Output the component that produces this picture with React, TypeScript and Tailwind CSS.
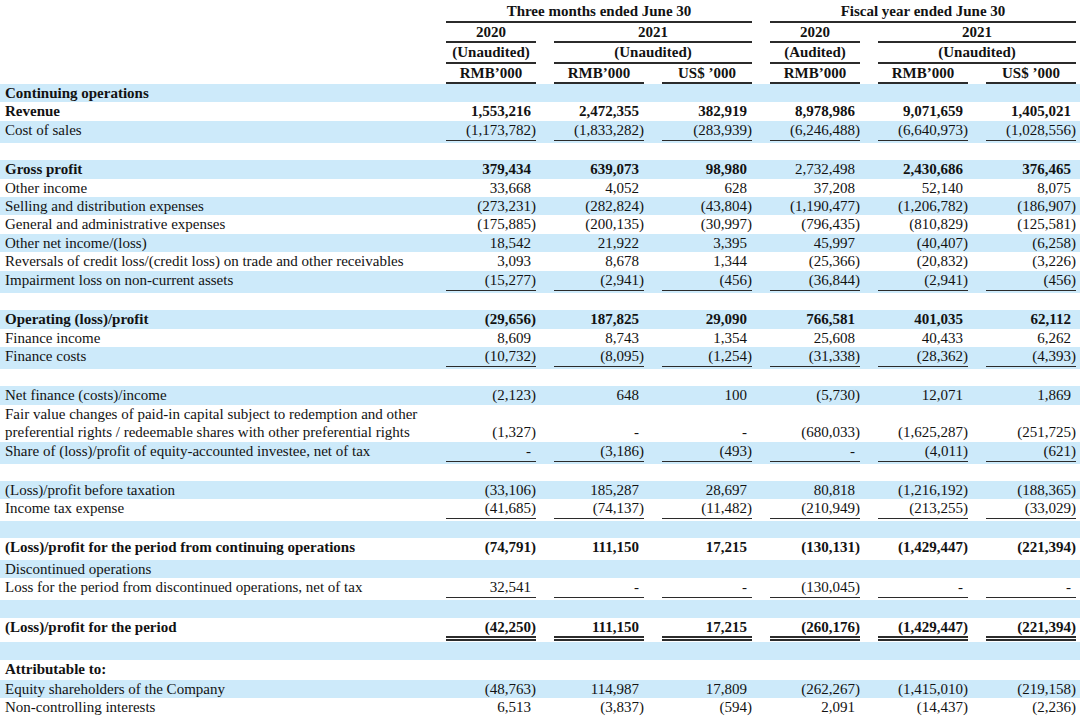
import React from "react";

type Row = {
  label?: string | string[];
  lb?: boolean;
  v?: string[];
  b?: boolean[];
  line?: "single" | "double";
  h: string;
};

const N = "h-[18.4px]";
const L = "h-[22px]";
const B = "h-[17.5px]";
const all = [true, true, true, true, true, true];

const rows: Row[] = [
  { label: "Continuing operations", lb: true, h: N },
  { label: "Revenue", lb: true, v: ["1,553,216", "2,472,355", "382,919", "8,978,986", "9,071,659", "1,405,021"], b: all, h: N },
  { label: "Cost of sales", v: ["(1,173,782)", "(1,833,282)", "(283,939)", "(6,246,488)", "(6,640,973)", "(1,028,556)"], line: "single", h: L },
  { h: B },
  { label: "Gross profit", lb: true, v: ["379,434", "639,073", "98,980", "2,732,498", "2,430,686", "376,465"], b: [true, true, true, false, true, true], h: N },
  { label: "Other income", v: ["33,668", "4,052", "628", "37,208", "52,140", "8,075"], h: N },
  { label: "Selling and distribution expenses", v: ["(273,231)", "(282,824)", "(43,804)", "(1,190,477)", "(1,206,782)", "(186,907)"], h: N },
  { label: "General and administrative expenses", v: ["(175,885)", "(200,135)", "(30,997)", "(796,435)", "(810,829)", "(125,581)"], h: N },
  { label: "Other net income/(loss)", v: ["18,542", "21,922", "3,395", "45,997", "(40,407)", "(6,258)"], h: N },
  { label: "Reversals of credit loss/(credit loss) on trade and other receivables", v: ["3,093", "8,678", "1,344", "(25,366)", "(20,832)", "(3,226)"], h: N },
  { label: "Impairment loss on non-current assets", v: ["(15,277)", "(2,941)", "(456)", "(36,844)", "(2,941)", "(456)"], line: "single", h: L },
  { h: B },
  { label: "Operating (loss)/profit", lb: true, v: ["(29,656)", "187,825", "29,090", "766,581", "401,035", "62,112"], b: all, h: N },
  { label: "Finance income", v: ["8,609", "8,743", "1,354", "25,608", "40,433", "6,262"], h: N },
  { label: "Finance costs", v: ["(10,732)", "(8,095)", "(1,254)", "(31,338)", "(28,362)", "(4,393)"], line: "single", h: L },
  { h: B },
  { label: "Net finance (costs)/income", v: ["(2,123)", "648", "100", "(5,730)", "12,071", "1,869"], h: N },
  {
    label: [
      "Fair value changes of paid-in capital subject to redemption and other",
      "preferential rights / redeemable shares with other preferential rights",
    ],
    v: ["(1,327)", "-", "-", "(680,033)", "(1,625,287)", "(251,725)"],
    h: "h-[36.8px]",
  },
  { label: "Share of (loss)/profit of equity-accounted investee, net of tax", v: ["-", "(3,186)", "(493)", "-", "(4,011)", "(621)"], line: "single", h: L },
  { h: B },
  { label: "(Loss)/profit before taxation", v: ["(33,106)", "185,287", "28,697", "80,818", "(1,216,192)", "(188,365)"], h: N },
  { label: "Income tax expense", v: ["(41,685)", "(74,137)", "(11,482)", "(210,949)", "(213,255)", "(33,029)"], line: "single", h: L },
  { h: "h-[16.5px]" },
  { label: "(Loss)/profit for the period from continuing operations", lb: true, v: ["(74,791)", "111,150", "17,215", "(130,131)", "(1,429,447)", "(221,394)"], b: all, h: "h-[22px]" },
  { label: "Discontinued operations", h: N },
  { label: "Loss for the period from discontinued operations, net of tax", v: ["32,541", "-", "-", "(130,045)", "-", "-"], line: "single", h: L },
  { h: B },
  { label: "(Loss)/profit for the period", lb: true, v: ["(42,250)", "111,150", "17,215", "(260,176)", "(1,429,447)", "(221,394)"], b: all, line: "double", h: "h-[24px]" },
  { h: "h-[18.5px]" },
  { label: "Attributable to:", lb: true, h: "h-[19.5px]" },
  { label: "Equity shareholders of the Company", v: ["(48,763)", "114,987", "17,809", "(262,267)", "(1,415,010)", "(219,158)"], h: N },
  { label: "Non-controlling interests", v: ["6,513", "(3,837)", "(594)", "2,091", "(14,437)", "(2,236)"], h: N },
];

const grid = "grid grid-cols-[423px_repeat(6,90px)] gap-x-[18px] pl-[5px] pr-[4px]";
const hcell = "h-[20.5px] leading-[18.5px] border-b-2 border-[#2b2b2b] text-center font-bold";

const Header: React.FC = () => (
  <div className="pt-[2px]">
    <div className={grid}>
      <div />
      <div className={`${hcell} col-span-3`}>Three months ended June 30</div>
      <div className={`${hcell} col-span-3`}>Fiscal year ended June 30</div>
    </div>
    <div className={grid}>
      <div />
      <div className={hcell}>2020</div>
      <div className={`${hcell} col-span-2`}>2021</div>
      <div className={hcell}>2020</div>
      <div className={`${hcell} col-span-2`}>2021</div>
    </div>
    <div className={grid}>
      <div />
      <div className={hcell}>(Unaudited)</div>
      <div className={`${hcell} col-span-2`}>(Unaudited)</div>
      <div className={hcell}>(Audited)</div>
      <div className={`${hcell} col-span-2`}>(Unaudited)</div>
    </div>
    <div className={grid}>
      <div />
      <div className={hcell}>RMB’000</div>
      <div className={hcell}>RMB’000</div>
      <div className={hcell}>US$ ’000</div>
      <div className={hcell}>RMB’000</div>
      <div className={hcell}>RMB’000</div>
      <div className={hcell}>US$ ’000</div>
    </div>
  </div>
);

const App: React.FC = () => {
  return (
    <div
      className="w-[1080px] h-[716px] overflow-hidden bg-white text-[15px] text-[#121212]"
      style={{ fontFamily: '"Liberation Serif", "Times New Roman", serif' }}
    >
      <Header />
      {rows.map((r, i) => {
        const multi = Array.isArray(r.label);
        return (
          <div
            key={i}
            className={`${grid} ${r.h} items-start ${i % 2 === 0 ? "bg-[#cdeafa]" : "bg-white"}`}
          >
            <div className={`leading-[18.4px] whitespace-nowrap ${r.lb ? "font-bold" : ""}`}>
              {multi
                ? (r.label as string[]).map((t) => <div key={t}>{t}</div>)
                : r.label}
            </div>
            {r.v &&
              r.v.map((val, j) => {
                const paren = val.endsWith(")");
                const bold = r.b ? r.b[j] : false;
                const border =
                  r.line === "single"
                    ? "h-[20px] border-b-[1.5px] border-[#2b2b2b]"
                    : r.line === "double"
                    ? "h-[23.4px] border-b-[5px] border-double border-[#2b2b2b]"
                    : "";
                return (
                  <div
                    key={j}
                    className={`text-right leading-[18.4px] whitespace-nowrap ${multi ? "self-end" : ""} ${border} ${
                      bold ? "font-bold" : ""
                    } ${paren ? "" : "pr-[5px]"}`}
                  >
                    {val}
                  </div>
                );
              })}
          </div>
        );
      })}
    </div>
  );
};

export default App;
